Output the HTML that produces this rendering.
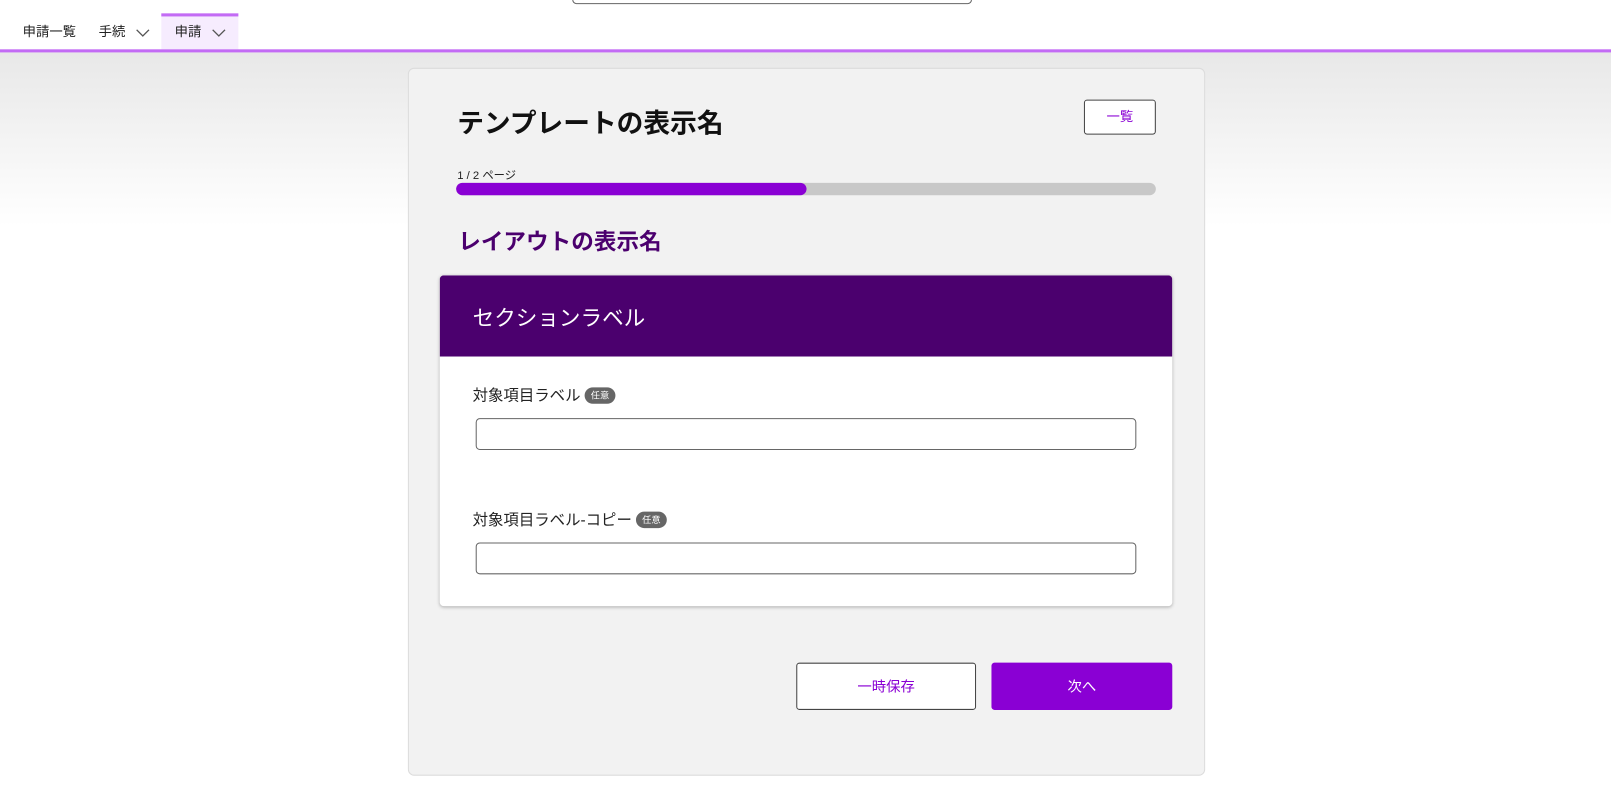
<!DOCTYPE html>
<html><head><meta charset="utf-8"><style>
*{box-sizing:border-box;margin:0;padding:0}
html,body{width:1611px;height:805px;overflow:hidden}
body{background:#fff}
#w{position:absolute;left:0;top:0;width:1568px;height:784px;transform:scale(1.02742);transform-origin:0 0;font-family:"Liberation Sans","Noto Sans CJK JP",sans-serif;background:linear-gradient(#e8e8e8 52px,#fff 220px);color:#222}
.top{position:absolute;left:0;top:0;width:1568px;height:49px;background:#fff}
.search{position:absolute;left:557px;top:-10px;width:389px;height:14px;border:1px solid #666;border-radius:4px}
.nav{position:absolute;top:13px;height:36px;font-size:13px;line-height:36px;color:#222}
.line{position:absolute;left:0;top:48px;width:1568px;height:3px;background:#c36bf5}
.tab{position:absolute;left:157px;top:13px;width:75px;height:35px;background:#f6ecfe;border-top:3px solid #c36bf5}
.chev{position:absolute;width:14px;height:8px}
.card{position:absolute;left:397px;top:66px;width:776px;height:689px;background:#f2f2f2;border:1px solid #dcdcdc;border-radius:6px}
h1{position:absolute;left:445px;top:100px;font-size:26px;font-weight:bold;color:#111}
.btn1{position:absolute;left:1055px;top:97px;width:70px;height:34px;border:1px solid #444;border-radius:3px;background:#fff;font-size:13px;text-align:center;line-height:32px;color:#8a00d4}
.pg{position:absolute;left:445px;top:162px;font-size:11px;color:#222}
.bar{position:absolute;left:444px;top:178px;width:681px;height:12px;background:#c8c8c8;border-radius:6px}
.bar div{width:341px;height:12px;background:#8a00d4;border-radius:6px}
h2{position:absolute;left:446px;top:218px;font-size:22px;font-weight:bold;color:#4b006e}
.sec{position:absolute;left:428px;top:268px;width:713px;height:322px;background:#fff;border-radius:4px;box-shadow:0 1px 3px rgba(0,0,0,.25);overflow:hidden}
.sh{height:79px;background:#4b006e;color:#fff;font-size:21px;padding:26px 0 0 32px}
.lbl{position:absolute;left:460px;font-size:15px;color:#222}
.tag{display:inline-block;background:#666;color:#fff;font-size:9px;border-radius:8px;padding:0 6px;height:16px;line-height:16px;vertical-align:2px;margin-left:4px}
.inp{position:absolute;left:463px;width:643px;height:31px;border:1px solid #666;border-radius:4px;background:#fff}
.b2{position:absolute;left:775px;top:645px;width:175px;height:46px;border:1px solid #444;border-radius:3px;background:#fff;color:#8a00d4;font-size:14px;text-align:center;line-height:44px}
.b3{position:absolute;left:965px;top:645px;width:176px;height:46px;border-radius:3px;background:#8a00d4;color:#fff;font-size:14px;text-align:center;line-height:46px}
</style></head><body><div id="w">
<div class="top"></div>
<div class="search"></div>
<div class="tab"></div>
<div class="line"></div>
<div class="nav" style="left:22px">申請一覧</div>
<div class="nav" style="left:96px">手続</div>
<svg class="chev" style="left:132px;top:28px" viewBox="0 0 14 8"><path d="M1 1l6 6 6-6" fill="none" stroke="#555" stroke-width="1.3"/></svg>
<div class="nav" style="left:170px">申請</div>
<svg class="chev" style="left:206px;top:28px" viewBox="0 0 14 8"><path d="M1 1l6 6 6-6" fill="none" stroke="#555" stroke-width="1.3"/></svg>
<div class="card"></div>
<h1>テンプレートの表示名</h1>
<div class="btn1">一覧</div>
<div class="pg">1 / 2 ページ</div>
<div class="bar"><div></div></div>
<h2>レイアウトの表示名</h2>
<div class="sec"><div class="sh">セクションラベル</div></div>
<div class="lbl" style="top:374px">対象項目ラベル<span class="tag">任意</span></div>
<div class="inp" style="top:407px"></div>
<div class="lbl" style="top:495px">対象項目ラベル-コピー<span class="tag">任意</span></div>
<div class="inp" style="top:528px"></div>
<div class="b2">一時保存</div>
<div class="b3">次へ</div>
</div></body></html>
